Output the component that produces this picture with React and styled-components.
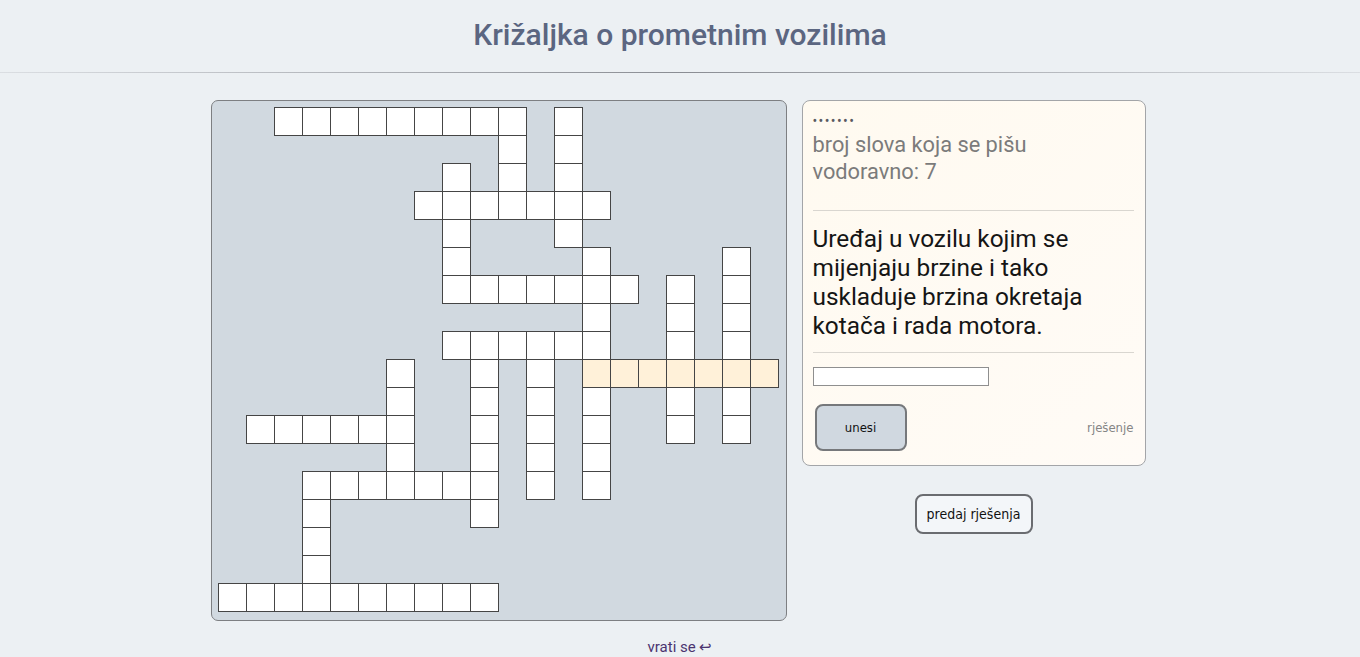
import React from "react";
import styled, { createGlobalStyle } from "styled-components";

const GlobalStyle = createGlobalStyle`
  html, body {
    margin: 0;
    padding: 0;
    background: #ecf0f3;
    font-family: Roboto, "Noto Sans", sans-serif;
  }
`;

// rows of the crossword, "#" = letter cell, "*" = active word
const LAYOUT = [
  "..#########.#.......",
  "..........#.#.......",
  "........#.#.#.......",
  ".......#######......",
  "........#...#.......",
  "........#....#....#.",
  "........#######.#.#.",
  ".............#..#.#.",
  "........######..#.#.",
  "......#..#.#.*******",
  "......#..#.#.#..#.#.",
  ".######..#.#.#..#.#.",
  "......#..#.#.#......",
  "...#######.#.#......",
  "...#.....#..........",
  "...#................",
  "...#................",
  "##########..........",
];

const App = () => {
  const cells = [];
  LAYOUT.forEach((row, r) => {
    row.split("").forEach((ch, c) => {
      if (ch !== ".") {
        cells.push(
          <Cell key={`${r}-${c}`} $row={r + 1} $col={c + 1} $active={ch === "*"} />
        );
      }
    });
  });

  return (
    <>
      <GlobalStyle />
      <Page>
        <Title>Križaljka o prometnim vozilima</Title>
        <Rule />
        <Main>
          <Board>
            <Grid>{cells}</Grid>
          </Board>
          <Side>
            <Panel>
              <Dots>•••••••</Dots>
              <Hint>broj slova koja se pišu vodoravno: 7</Hint>
              <Divider $top="25px" />
              <Question>
                Uređaj u vozilu kojim se mijenjaju brzine i tako uskladuje
                brzina okretaja kotača i rada motora.
              </Question>
              <Divider $top="12px" />
              <Answer type="text" />
              <Actions>
                <EnterButton>unesi</EnterButton>
                <SolutionLink>rješenje</SolutionLink>
              </Actions>
            </Panel>
            <SubmitButton>predaj rješenja</SubmitButton>
          </Side>
        </Main>
        <Back>
          vrati se <span>↩</span>
        </Back>
        <Rule $faint />
        <ScreenEdge />
      </Page>
    </>
  );
};

export default App;

const Page = styled.div`
  display: flex;
  flex-direction: column;
  align-items: stretch;
`;

const Title = styled.h1`
  margin: 16px 0 0;
  height: 38px;
  line-height: 38px;
  text-align: center;
  font-size: 30px;
  font-weight: 500;
  color: #5b6681;
`;

const Rule = styled.div`
  height: 1px;
  margin-top: ${({ $faint }) => ($faint ? "4px" : "18px")};
  background: ${({ $faint }) =>
    $faint
      ? "linear-gradient(to right, #dde2e6, #d8dde2, #dde2e6)"
      : "linear-gradient(to right, rgba(120,120,130,0.15), #8a8d93 50%, rgba(120,120,130,0.15))"};
`;

const Main = styled.div`
  display: flex;
  justify-content: center;
  align-items: flex-start;
  gap: 15px;
  margin-top: 27px;
  margin-left: -4px;
`;

const Board = styled.div`
  box-sizing: border-box;
  width: 576px;
  height: 521px;
  padding: 6px;
  background: #d1d9e0;
  border: 1px solid #7d7f82;
  border-radius: 7px;
`;

const Grid = styled.div`
  display: grid;
  grid-template-columns: repeat(20, 28px);
  grid-template-rows: repeat(18, 28px);
`;

const Cell = styled.div`
  grid-row: ${({ $row }) => $row};
  grid-column: ${({ $col }) => $col};
  box-sizing: border-box;
  width: 29px;
  height: 29px;
  border: 1px solid #454545;
  background: ${({ $active }) => ($active ? "#fff1d9" : "#ffffff")};
`;

const Side = styled.div`
  display: flex;
  flex-direction: column;
  align-items: center;
  gap: 28px;
`;

const Panel = styled.div`
  box-sizing: border-box;
  width: 344px;
  padding: 10px 11px 14px 10px;
  background: linear-gradient(135deg, #fffaf0, #fffbf6);
  border: 1px solid #a3a5a8;
  border-radius: 8px;
`;

const Dots = styled.div`
  height: 20px;
  line-height: 20px;
  font-size: 14px;
  letter-spacing: 1.4px;
  color: #5a5a62;
`;

const Hint = styled.div`
  font-size: 21.8px;
  line-height: 27px;
  color: #7b7b7b;
  padding-right: 70px;
`;

const Divider = styled.div`
  height: 1px;
  background: #d9d6d0;
  margin: ${({ $top }) => $top} 0 13px;
`;

const Question = styled.div`
  font-size: 24.4px;
  line-height: 29px;
  color: #151515;
  padding-right: 20px;
`;

const Answer = styled.input`
  display: block;
  box-sizing: border-box;
  width: 176px;
  height: 19px;
  margin: 14px 0 0;
  border: 1px solid #8f8f8f;
  background: #ffffff;
  outline: none;
`;

const Actions = styled.div`
  display: flex;
  align-items: center;
  justify-content: space-between;
  margin-top: 18px;
  padding-left: 2px;
`;

const EnterButton = styled.button`
  box-sizing: border-box;
  width: 92px;
  height: 47px;
  background: #d0d8e0;
  border: 2px solid #76787b;
  border-radius: 8px;
  font-family: "DejaVu Sans Condensed", "DejaVu Sans", sans-serif;
  font-size: 13px;
  color: #111;
`;

const SolutionLink = styled.span`
  font-family: "DejaVu Sans Condensed", "DejaVu Sans", sans-serif;
  font-size: 13px;
  color: #858585;
`;

const SubmitButton = styled.button`
  box-sizing: border-box;
  width: 118px;
  height: 40px;
  background: #f3f6f9;
  border: 2px solid #6a6c70;
  border-radius: 8px;
  font-family: "DejaVu Sans Condensed", "DejaVu Sans", sans-serif;
  font-size: 14px;
  color: #111;
`;

const Back = styled.div`
  margin-top: 17px;
  text-align: center;
  font-size: 15px;
  line-height: 18px;
  color: #4b3470;

  span {
    font-size: 15px;
  }
`;

const ScreenEdge = styled.div`
  height: 2px;
  margin-top: 5px;
  background: #1a1a1a;
`;
